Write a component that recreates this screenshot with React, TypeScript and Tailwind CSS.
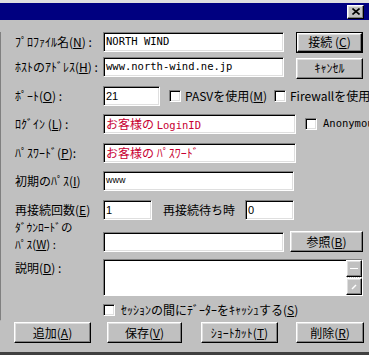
import React from 'react';

const jp = "font-['Noto_Sans_CJK_JP','Noto_Sans',sans-serif]";
const mono = "font-['DejaVu_Sans_Mono','Liberation_Mono',monospace]";
const sunken =
  'bg-white border border-t-[#808080] border-l-[#808080] border-b-white border-r-white shadow-[inset_1px_1px_0_#000,inset_-1px_-1px_0_#dfdfdf]';
const raised =
  'bg-[#c0c0c0] border border-t-white border-l-white border-b-black border-r-black shadow-[inset_-1px_-1px_0_#808080,inset_1px_1px_0_#dfdfdf]';

function Btn({ w, h = 'h-[21px]', children, def }: { w: string; h?: string; children: React.ReactNode; def?: boolean }) {
  if (def) {
    return (
      <div className={`${w} ${h} border border-black flex`}>
        <div className={`flex-1 ${raised} flex items-center justify-center text-[12px] leading-none`}>{children}</div>
      </div>
    );
  }
  return <div className={`${w} ${h} ${raised} flex items-center justify-center text-[12px] leading-none`}>{children}</div>;
}

function Check() {
  return <div className={`w-[12px] h-[12px] shrink-0 ${sunken}`} />;
}

function Field({ w, h = 'h-[20px]', children }: { w: string; h?: string; children?: React.ReactNode }) {
  return <div className={`${w} ${h} shrink-0 ${sunken} flex items-center pl-[2px] overflow-hidden whitespace-nowrap`}>{children}</div>;
}

function Label({ children }: { children: React.ReactNode }) {
  return <div className="w-[88px] shrink-0 text-[12px] leading-none whitespace-nowrap">{children}</div>;
}

export default function App() {
  return (
    <div className={`w-[369px] h-[355px] bg-[#c0c0c0] overflow-hidden flex flex-col text-black ${jp}`}>
      <div className="h-[3px] bg-[#dfdfdf]" />
      <div className="h-[18px] bg-[#000080] flex items-center justify-end pr-[5px]">
        <div className={`w-[17px] h-[14px] ${raised} flex items-center justify-center`}>
          <svg width="8" height="7" viewBox="0 0 8 7">
            <path d="M0.5 0.5 L7.5 6.5 M7.5 0.5 L0.5 6.5" stroke="#000" strokeWidth="1.6" />
          </svg>
        </div>
      </div>

      <div className="flex mt-[12px]">
        <div className="w-[5px] h-[289px] bg-white border-r border-b border-r-[#808080] border-b-[#dfdfdf]" />
        <div className="ml-[14px] flex flex-col">
          {/* profile */}
          <div className="flex items-center h-[20px]">
            <Label>ﾌﾟﾛﾌｧｲﾙ名(<u>N</u>) :</Label>
            <Field w="w-[181px]">
              <span className={`${mono} text-[10.5px]`}>NORTH WIND</span>
            </Field>
            <div className="ml-[12px]">
              <Btn w="w-[67px]" def>接続 (<u>C</u>)</Btn>
            </div>
          </div>
          {/* host */}
          <div className="flex items-center h-[20px] mt-[5px]">
            <Label>ﾎｽﾄのｱﾄﾞﾚｽ(<u>H</u>) :</Label>
            <Field w="w-[181px]">
              <span className={`${mono} text-[10.5px]`}>www.north-wind.ne.jp</span>
            </Field>
            <div className="ml-[12px] mt-[2px]">
              <Btn w="w-[67px]">ｷｬﾝｾﾙ</Btn>
            </div>
          </div>
          {/* port */}
          <div className="flex items-center h-[20px] mt-[9px] whitespace-nowrap">
            <Label>ﾎﾟｰﾄ(<u>O</u>) :</Label>
            <Field w="w-[57px]">
              <span className="font-['Liberation_Sans',sans-serif] text-[11px]">21</span>
            </Field>
            <div className="ml-[9px]"><Check /></div>
            <span className="ml-[4px] w-[89px] shrink-0 text-[12px] leading-none">PASVを使用(<u>M</u>)</span>
            <Check />
            <span className="ml-[4px] text-[12px] leading-none">Firewallを使用</span>
          </div>
          {/* login */}
          <div className="flex items-center h-[20px] mt-[8px] whitespace-nowrap">
            <Label>ﾛｸﾞｲﾝ (<u>L</u>) :</Label>
            <Field w="w-[193px]">
              <span className="text-[#c80032] text-[12px] leading-none">お客様の <span className={`${mono} text-[10.5px]`}>LoginID</span></span>
            </Field>
            <div className="ml-[9px]"><Check /></div>
            <span className={`ml-[6px] ${mono} text-[10.5px]`}>Anonymous</span>
          </div>
          {/* password */}
          <div className="flex items-center h-[20px] mt-[9px]">
            <Label>ﾊﾟｽﾜｰﾄﾞ(<u>P</u>):</Label>
            <Field w="w-[193px]">
              <span className="text-[#c80032] text-[12px] leading-none">お客様の ﾊﾟｽﾜｰﾄﾞ</span>
            </Field>
          </div>
          {/* initial path */}
          <div className="flex items-center h-[20px] mt-[8px]">
            <Label>初期のﾊﾟｽ(<u>I</u>)</Label>
            <Field w="w-[191px]">
              <span className="font-['Liberation_Sans',sans-serif] text-[9px]">www</span>
            </Field>
          </div>
          {/* reconnect */}
          <div className="flex items-center h-[20px] mt-[9px] whitespace-nowrap">
            <Label>再接続回数(<u>E</u>)</Label>
            <Field w="w-[49px]">
              <span className="font-['Liberation_Sans',sans-serif] text-[11px]">1</span>
            </Field>
            <span className="ml-[11px] w-[82px] shrink-0 text-[12px] leading-none">再接続待ち時</span>
            <Field w="w-[49px]">
              <span className="font-['Liberation_Sans',sans-serif] text-[11px]">0</span>
            </Field>
          </div>
          {/* download */}
          <div className="flex items-end h-[32px]">
            <div className="w-[88px] shrink-0 text-[11.5px] leading-[17px] -mb-[1px]">
              <div>ﾀﾞｳﾝﾛｰﾄﾞの</div>
              <div>ﾊﾟｽ(<u>W</u>) :</div>
            </div>
            <Field w="w-[181px]" />
            <div className="ml-[6px]">
              <Btn w="w-[73px]">参照(<u>B</u>)</Btn>
            </div>
          </div>
          {/* description */}
          <div className="flex items-start mt-[7px]">
            <div className="w-[88px] shrink-0 text-[12px] leading-none pt-[3px]">説明(<u>D</u>) :</div>
            <div className="w-[260px] h-[37px] flex border border-t-[#808080] border-l-[#808080] border-b-white border-r-white">
              <div className="flex-1 bg-white shadow-[inset_1px_1px_0_#000]" />
              <div className="w-[16px] flex flex-col bg-[repeating-linear-gradient(90deg,#fff_0_1px,#c0c0c0_1px_2px)]">
                <div className={`h-[17px] ${raised} flex items-center justify-center`}>
                  <div className="w-[8px] h-[1px] bg-white" />
                </div>
                <div className="flex-1" />
                <div className={`h-[17px] ${raised} flex items-center justify-center`}>
                  <svg width="6" height="6" viewBox="0 0 6 6">
                    <path d="M1 5 L5 1" stroke="#fff" strokeWidth="1.5" />
                  </svg>
                </div>
              </div>
            </div>
          </div>
          {/* cache */}
          <div className="flex items-center h-[12px] mt-[8px] whitespace-nowrap">
            <div className="w-[88px] shrink-0" />
            <Check />
            <span className="ml-[6px] text-[12px] leading-none">ｾｯｼｮﾝの間にﾃﾞｰﾀｰをｷｬｯｼｭする(<u>S</u>)</span>
          </div>
          {/* buttons */}
          <div className="flex items-center mt-[6px] -ml-[1px]">
            <Btn w="w-[77px]">追加(<u>A</u>)</Btn>
            <div className="ml-[16px]"><Btn w="w-[75px]">保存(<u>V</u>)</Btn></div>
            <div className="ml-[19px]"><Btn w="w-[77px]">ｼｮｰﾄｶｯﾄ(<u>T</u>)</Btn></div>
            <div className="ml-[18px]"><Btn w="w-[68px]">削除(<u>R</u>)</Btn></div>
          </div>
        </div>
      </div>
      <div className="mt-[9px] h-[3px] bg-[#404040]" />
    </div>
  );
}
